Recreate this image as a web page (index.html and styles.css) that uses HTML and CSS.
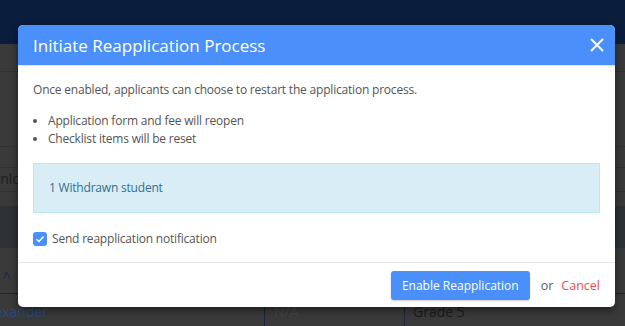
FILE: index.html
```html
<!DOCTYPE html>
<html lang="en">
<head>
<meta charset="UTF-8">
<meta name="viewport" content="width=device-width, initial-scale=1.0">
<title>Initiate Reapplication Process</title>
<link rel="stylesheet" href="styles.css">
</head>
<body>
  <div class="topbar"></div>
  <div class="page">
    <div class="row row-a"></div>
    <div class="row row-b"></div>
    <div class="row row-c"></div>
    <div class="row row-d"><span class="cell-text">Unlock</span></div>
    <div class="row row-e"></div>
    <div class="row row-band"></div>
    <div class="row row-head"><span class="chevron">^</span></div>
    <div class="row row-data">
      <div class="cell cell-name"><a href="#">Alexander</a></div>
      <div class="cell cell-na">N/A</div>
      <div class="cell cell-grade">Grade 5</div>
    </div>
  </div>

  <div class="modal">
    <div class="modal-header">
      <h2>Initiate Reapplication Process</h2>
      <button class="close-btn" aria-label="Close">
        <svg width="14" height="14" viewBox="0 0 14 14"><path d="M1 1L13 13M13 1L1 13" stroke="#fff" stroke-width="2" fill="none"/></svg>
      </button>
    </div>
    <div class="modal-body">
      <p>Once enabled, applicants can choose to restart the application process.</p>
      <ul>
        <li>Application form and fee will reopen</li>
        <li>Checklist items will be reset</li>
      </ul>
      <div class="info-box">1 Withdrawn student</div>
      <label class="check-row">
        <span class="checkbox">
          <svg width="10" height="10" viewBox="0 0 10 10"><path d="M1.5 5.2L4 7.5L8.5 2.5" stroke="#fff" stroke-width="1.5" fill="none"/></svg>
        </span>
        Send reapplication notification
      </label>
    </div>
    <div class="modal-footer">
      <button class="primary-btn">Enable Reapplication</button>
      <span class="or">or</span>
      <a href="#" class="cancel">Cancel</a>
    </div>
  </div>
</body>
</html>
```
FILE: styles.css
```css
body {
  margin: 0;
  padding: 0;
  font-family: "Open Sans", Arial, sans-serif;
  background-color: #3a3a3a;
  color: #555555;
  overflow: hidden;
  height: 326px;
}
.topbar {
  height: 44px;
  background-color: #0b1d3d;
}
.page {
  background-color: #3a3a3a;
}
.row {
  border-bottom: 1px solid #313131;
  box-sizing: border-box;
}
.row-a { height: 28px; }
.row-b { height: 75px; }
.row-c { height: 21px; }
.row-d {
  height: 24px;
  line-height: 22px;
  font-size: 14px;
  color: #1e1e1e;
  overflow: hidden;
}
.cell-text {
  margin-left: -10px;
}
.row-e { height: 15px; }
.row-band {
  height: 41px;
  background-color: #2d3236;
}
.row-head {
  height: 46px;
  border-bottom: 1px solid #1a2440;
  color: #1c2a48;
  font-size: 16px;
  line-height: 58px;
  padding-left: 2px;
}
.row-data {
  display: flex;
  height: 40px;
  border-bottom: none;
  font-size: 14px;
  line-height: 36px;
}
.cell {
  box-sizing: border-box;
  padding-left: 9px;
}
.cell-name {
  width: 265px;
  padding-left: 0;
  border-right: 1px solid #1a2440;
  overflow: hidden;
}
.cell-name a {
  display: inline-block;
  color: #284a7e;
  text-decoration: none;
  margin-left: -18px;
}
.cell-na {
  width: 140px;
  color: #454545;
  border-right: 1px solid #1a2440;
}
.cell-grade {
  color: #1c1c1c;
  padding-left: 8px;
}

.modal {
  position: absolute;
  top: 25px;
  left: 18px;
  width: 597px;
  background-color: #ffffff;
  border-radius: 5px;
  overflow: hidden;
  box-shadow: 0 3px 9px rgba(0, 0, 0, 0.5);
}
.modal-header {
  display: flex;
  align-items: center;
  justify-content: space-between;
  height: 40px;
  padding: 0 11px 0 15px;
  background-color: #4a8ffa;
  border-bottom: 1px solid #e5e5e5;
}
.modal-header h2 {
  margin: 0;
  font-size: 17px;
  font-weight: 400;
  color: #ffffff;
}
.close-btn {
  border: none;
  background: none;
  padding: 0;
  width: 14px;
  height: 14px;
  cursor: pointer;
  display: flex;
}
.modal-body {
  padding: 15px 15px 14px;
  font-size: 12px;
  line-height: 18px;
  letter-spacing: -0.2px;
}
.modal-body p {
  margin: 0 0 13px;
}
.modal-body ul {
  margin: 0 0 15px;
  padding-left: 15px;
}
.info-box {
  padding: 15px;
  background-color: #d9edf7;
  border: 1px solid #bce8f1;
  color: #31708f;
  margin-bottom: 17px;
}
.check-row {
  display: flex;
  align-items: center;
  gap: 5px;
}
.checkbox {
  display: flex;
  align-items: center;
  justify-content: center;
  width: 14px;
  height: 14px;
  border-radius: 3px;
  background-color: #4a8ffa;
}
.modal-footer {
  display: flex;
  align-items: center;
  justify-content: flex-end;
  padding: 8px 15px 7px;
  border-top: 1px solid #e5e5e5;
  font-size: 12px;
}
.primary-btn {
  font-family: inherit;
  font-size: 12px;
  color: #ffffff;
  background-color: #4a8ffa;
  border: none;
  border-radius: 3px;
  padding: 5px 11px;
  height: 29px;
  box-shadow: 0 1px 2px rgba(0, 0, 0, 0.2);
}
.or {
  margin: 0 8px 0 11px;
  color: #555e70;
  font-size: 12.5px;
}
.cancel {
  color: #f04a4a;
  text-decoration: none;
  font-size: 12.5px;
}
```
